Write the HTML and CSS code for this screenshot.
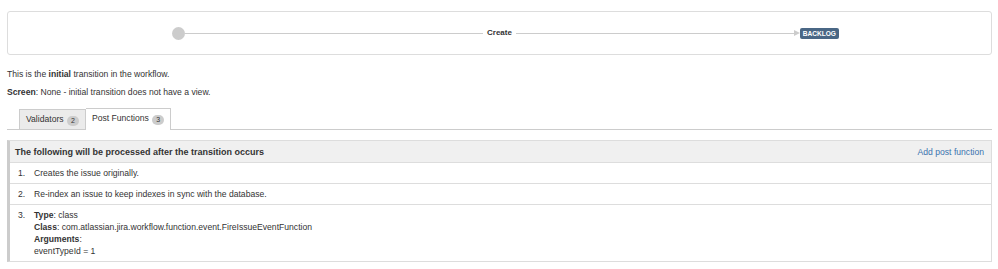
FILE: index.html
```html
<!DOCTYPE html>
<html lang="en">
<head>
    <meta charset="UTF-8">
    <title>Transition: Create</title>
    <link rel="stylesheet" href="styles.css">
</head>
<body>
    <section class="diagram">
        <span class="start-node"></span>
        <span class="edge edge-first"></span>
        <span class="edge-label">Create</span>
        <span class="edge edge-last"></span>
        <span class="arrow"></span>
        <span class="status-lozenge">BACKLOG</span>
    </section>

    <p class="intro">This is the <strong>initial</strong> transition in the workflow.</p>
    <p class="intro"><strong>Screen</strong>: None - initial transition does not have a view.</p>

    <ul class="tabs">
        <li class="tab">Validators <span class="badge">2</span></li>
        <li class="tab active">Post Functions <span class="badge">3</span></li>
    </ul>

    <div class="functions">
        <div class="functions-header">
            <span class="functions-title">The following will be processed after the transition occurs</span>
            <a href="#" class="add-link">Add post function</a>
        </div>
        <div class="function-row">
            <span class="num">1.</span>
            <div>Creates the issue originally.</div>
        </div>
        <div class="function-row">
            <span class="num">2.</span>
            <div>Re-index an issue to keep indexes in sync with the database.</div>
        </div>
        <div class="function-row">
            <span class="num">3.</span>
            <div>
                <div><strong>Type</strong>: class</div>
                <div><strong>Class</strong>: com.atlassian.jira.workflow.function.event.FireIssueEventFunction</div>
                <div><strong>Arguments</strong>:</div>
                <div>eventTypeId = 1</div>
            </div>
        </div>
    </div>
</body>
</html>
```

FILE: styles.css
```css
body {
    font-family: "Liberation Sans", Arial, sans-serif;
    font-size: 8.6px;
    line-height: 12px;
    color: #333;
    margin: 0;
    padding: 11px 6px 0 7px;
    background-color: #fff;
}

.diagram {
    display: flex;
    align-items: center;
    height: 42px;
    border: 1px solid #ddd;
    border-radius: 3px;
    padding: 0 152px 0 164px;
}

.start-node {
    width: 13px;
    height: 13px;
    border-radius: 50%;
    background-color: #ccc;
    flex: none;
}

.edge {
    height: 1px;
    background-color: #ccc;
}

.edge-first {
    width: 298px;
}

.edge-last {
    flex: 1;
}

.edge-label {
    font-size: 8px;
    font-weight: bold;
    padding: 0 4px;
}

.arrow {
    width: 0;
    height: 0;
    border-top: 3px solid transparent;
    border-bottom: 3px solid transparent;
    border-left: 6px solid #ccc;
}

.status-lozenge {
    background-color: #4a6785;
    color: #fff;
    font-size: 6.6px;
    font-weight: bold;
    line-height: 11px;
    padding: 0 3px;
    border-radius: 2px;
}

.intro {
    margin: 13px 0 0;
}

.intro + .intro {
    margin-top: 6px;
}

.tabs {
    display: flex;
    list-style: none;
    margin: 10px 0 0;
    padding: 0 0 0 12px;
    border-bottom: 1px solid #ccc;
}

.tab {
    padding: 3px 6px;
    margin-top: 1px;
    background-color: #ebebeb;
    border: 1px solid #ccc;
    border-bottom: none;
}

.tab.active {
    background-color: #fff;
    margin-top: 0;
    margin-bottom: -1px;
    padding-bottom: 5px;
    border-left: none;
}

.badge {
    display: inline-block;
    min-width: 12px;
    height: 10px;
    margin-left: 1px;
    background-color: #ccc;
    color: #333;
    font-size: 7px;
    line-height: 10px;
    text-align: center;
    border-radius: 5px;
    vertical-align: -1px;
}

.functions {
    margin-top: 10px;
    border: 1px solid #ddd;
    border-left: 3px solid #ccc;
}

.functions-header {
    display: flex;
    justify-content: space-between;
    align-items: center;
    height: 21px;
    padding: 0 7px 0 5px;
    background-color: #f0f0f0;
    border-bottom: 1px solid #ddd;
}

.functions-title {
    font-size: 9px;
    font-weight: bold;
}

.add-link {
    color: #3b73af;
    text-decoration: none;
}

.function-row {
    display: flex;
    padding: 4px 0;
    border-bottom: 1px solid #ddd;
}

.function-row:last-child {
    border-bottom: none;
}

.num {
    width: 16px;
    padding-left: 8px;
}
```
